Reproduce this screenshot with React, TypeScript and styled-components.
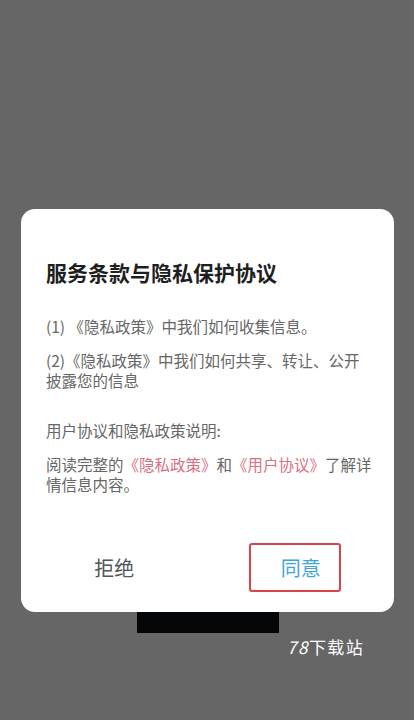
import React from 'react';
import styled, { createGlobalStyle } from 'styled-components';

const GlobalStyle = createGlobalStyle`
  html, body {
    margin: 0;
    padding: 0;
    background: #666666;
  }
  body {
    font-family: "Noto Sans CJK SC", "Noto Sans", sans-serif;
  }
`;

const Screen = styled.div`
  width: 414px;
  height: 720px;
  background: #666666;
  display: flex;
  flex-direction: column;
  overflow: hidden;
`;

const Dialog = styled.div`
  margin: 209px 20px 0 21px;
  height: 403px;
  box-sizing: border-box;
  background: #ffffff;
  border-radius: 14px;
  padding: 49px 25px 20px;
  display: flex;
  flex-direction: column;
`;

const Title = styled.h3`
  margin: 0;
  font-size: 21px;
  line-height: 28px;
  font-weight: 700;
  color: #1f1f1f;
`;

const Para = styled.p<{ $gap: number }>`
  margin: ${(p) => p.$gap}px 0 0;
  font-size: 15.5px;
  line-height: 20px;
  color: #666666;
  white-space: nowrap;
`;

const Link = styled.span`
  color: #d9707f;
`;

const Actions = styled.div`
  margin-top: auto;
  display: grid;
  grid-template-columns: 1fr 1fr;
  margin-left: -25px;
  margin-right: -25px;
  height: 50px;
`;

const ActionButton = styled.button<{ $primary?: boolean }>`
  all: unset;
  display: flex;
  align-items: center;
  justify-content: center;
  font-size: 20px;
  color: ${(p) => (p.$primary ? '#3ea6d6' : '#555555')};
  cursor: pointer;
`;

const Highlight = styled.span`
  box-sizing: border-box;
  width: 92px;
  height: 49px;
  border: 2px solid #d9434a;
  border-radius: 3px;
  display: flex;
  align-items: center;
  justify-content: center;
  padding-left: 12px;
  margin-left: -12px;
`;

const Footer = styled.div`
  display: flex;
  flex-direction: column;
`;

const BlackBar = styled.div`
  margin-left: 137px;
  width: 142px;
  height: 21px;
  background: #050608;
`;

const Watermark = styled.div`
  margin: 3px 0 0 287px;
  font-size: 17px;
  line-height: 22px;
  letter-spacing: 1.5px;
  color: #ffffff;
`;

const Slanted = styled.span`
  font-style: italic;
`;

export default function App() {
  return (
    <>
      <GlobalStyle />
      <Screen>
        <Dialog>
          <Title>服务条款与隐私保护协议</Title>
          <Para $gap={30}>(1) 《隐私政策》中我们如何收集信息。</Para>
          <Para $gap={14}>
            (2)《隐私政策》中我们如何共享、转让、公开
            <br />
            披露您的信息
          </Para>
          <Para $gap={30}>用户协议和隐私政策说明:</Para>
          <Para $gap={14}>
            阅读完整的<Link>《隐私政策》</Link>和<Link>《用户协议》</Link>了解详
            <br />
            情信息内容。
          </Para>
          <Actions>
            <ActionButton>拒绝</ActionButton>
            <ActionButton $primary>
              <Highlight>同意</Highlight>
            </ActionButton>
          </Actions>
        </Dialog>
        <Footer>
          <BlackBar />
          <Watermark>
            <Slanted>78</Slanted>下载站
          </Watermark>
        </Footer>
      </Screen>
    </>
  );
}
